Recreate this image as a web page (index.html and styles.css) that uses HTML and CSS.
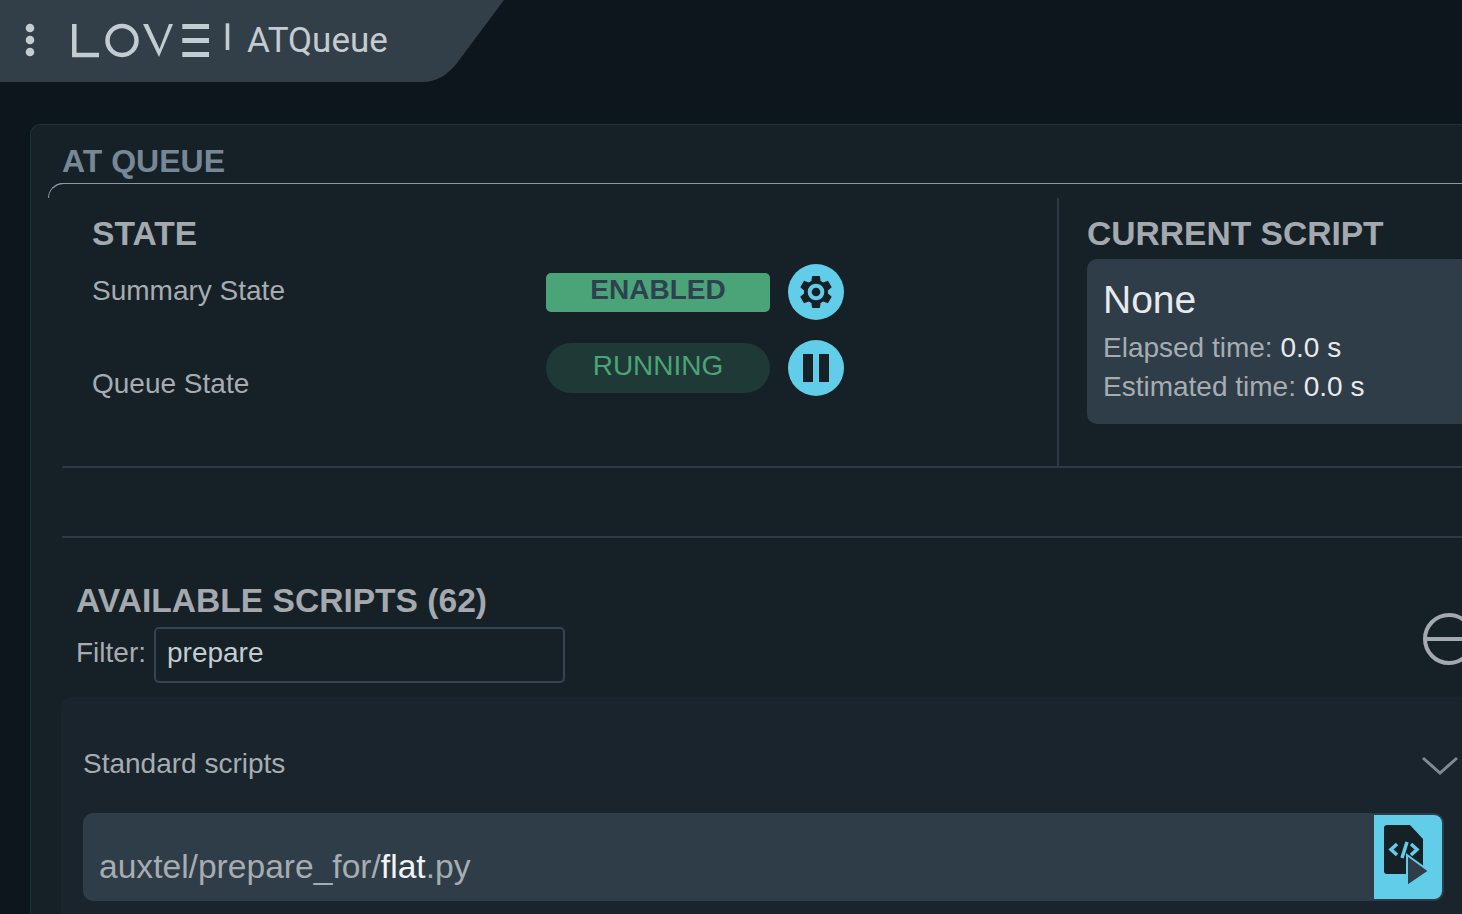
FILE: index.html
```html
<!DOCTYPE html>
<html lang="en">
<head>
<meta charset="utf-8">
<title>ATQueue</title>
<link rel="stylesheet" href="styles.css">
</head>
<body>
<header class="topbar">
  <button class="menu-btn" aria-label="Menu">
    <svg width="10" height="34" viewBox="0 0 10 34"><circle cx="5" cy="5" r="4.3"/><circle cx="5" cy="17" r="4.3"/><circle cx="5" cy="29" r="4.3"/></svg>
  </button>
  <svg class="logo" width="160" height="36" viewBox="0 0 160 36" role="img" aria-label="LOVE">
    <polyline class="logo-line" points="3.3,1 3.3,32 28,32"/>
    <circle class="logo-line" cx="51" cy="17.5" r="14.5"/>
    <polygon class="logo-fill" points="72,1 77,1 88.5,26 98,1 102,1 88,34"/>
    <rect class="logo-fill" x="111.3" y="1" width="26.7" height="5"/>
    <rect class="logo-fill" x="111.3" y="15" width="26.7" height="5"/>
    <rect class="logo-fill" x="111.3" y="29" width="26.7" height="5"/>
    <rect class="logo-fill" x="154.7" y="0.3" width="3.6" height="26.7"/>
  </svg>
  <span class="view-name">ATQueue</span>
</header>

<main class="card">
  <h1 class="card-title">AT QUEUE</h1>
  <div class="card-body">
    <section class="top-grid">
      <div class="state-col">
        <h2 class="heading">STATE</h2>
        <div class="state-grid">
          <span class="label label-first">Summary State</span>
          <span class="pill pill-enabled">ENABLED</span>
          <button class="round-btn" aria-label="Settings">
            <svg width="40" height="40" viewBox="0 0 24 24"><path class="ico" d="M19.14 12.94c.04-.3.06-.61.06-.94 0-.32-.02-.64-.07-.94l2.03-1.58a.49.49 0 0 0 .12-.61l-1.92-3.32a.488.488 0 0 0-.59-.22l-2.39.96c-.5-.38-1.03-.7-1.62-.94l-.36-2.54a.484.484 0 0 0-.48-.41h-3.84c-.24 0-.43.17-.47.41l-.36 2.54c-.59.24-1.13.57-1.62.94l-2.39-.96c-.22-.08-.47 0-.59.22L2.74 8.87c-.12.21-.08.47.12.61l2.03 1.58c-.05.3-.09.63-.09.94s.02.64.07.94l-2.03 1.58a.49.49 0 0 0-.12.61l1.92 3.32c.12.22.37.29.59.22l2.39-.96c.5.38 1.03.7 1.62.94l.36 2.54c.05.24.24.41.48.41h3.84c.24 0 .44-.17.47-.41l.36-2.54c.59-.24 1.13-.56 1.62-.94l2.39.96c.22.08.47 0 .59-.22l1.92-3.32c.12-.22.07-.47-.12-.61l-2.01-1.58z"/><circle class="gear-ring" cx="12" cy="12" r="5"/><circle class="ico" cx="12" cy="12" r="2.6"/></svg>
          </button>
          <span class="label label-second">Queue State</span>
          <span class="pill pill-running">RUNNING</span>
          <button class="round-btn" aria-label="Pause">
            <svg width="26" height="28" viewBox="0 0 26 28"><rect class="ico" x="0" y="0" width="10" height="28"/><rect class="ico" x="16" y="0" width="10" height="28"/></svg>
          </button>
        </div>
      </div>
      <div class="current-col">
        <h2 class="heading">CURRENT SCRIPT</h2>
        <div class="current-panel">
          <div class="current-name">None</div>
          <div class="time-line">Elapsed time: <span class="time-value">0.0 s</span></div>
          <div class="time-line">Estimated time: <span class="time-value">0.0 s</span></div>
        </div>
      </div>
    </section>
    <div class="spacer"></div>

    <section class="available">
      <div class="available-head">
        <div class="available-left">
          <h2 class="heading">AVAILABLE SCRIPTS (62)</h2>
          <div class="filter">
            <span class="filter-label">Filter:</span>
            <div class="filter-input">prepare</div>
          </div>
        </div>
        <svg class="collapse-icon" width="52" height="52" viewBox="0 0 52 52"><circle cx="26" cy="26" r="24"/><line x1="2" y1="26" x2="50" y2="26"/></svg>
      </div>
      <div class="scripts-panel">
        <div class="group-head">
          <span class="group-name">Standard scripts</span>
          <svg class="chevron" width="38" height="20" viewBox="0 0 38 20"><polyline points="2,2 19,17 36,2"/></svg>
        </div>
        <div class="script-row">
          <div class="script-path">auxtel/prepare_for/<span class="script-name">flat</span>.py</div>
          <button class="launch-btn" aria-label="Launch script">
            <svg width="48" height="62" viewBox="0 0 48 62">
              <path class="ico" d="M3 0H26L39 14V46Q39 49 36 49H3Q0 49 0 46V3Q0 0 3 0Z"/>
              <path class="code" d="M13 19L7 24.5L13 30M27 19L33 24.5L27 30M23 17L18 33"/>
              <polygon class="play" points="23,30 45,46 23,61"/>
            </svg>
          </button>
        </div>
      </div>
    </section>
  </div>
</main>
</body>
</html>
```
FILE: styles.css
```css
* { box-sizing: border-box; }
html, body { margin: 0; height: 914px; overflow: hidden; }
body {
  background: #0e161d;
  font-family: "Liberation Sans", Arial, sans-serif;
  color: #a7acb1;
}
button { border: 0; padding: 0; background: none; }

.topbar {
  width: 505px;
  height: 82px;
  background: #333f48;
  clip-path: path("M0 0H504L457 63Q442 82 423 82H0Z");
  display: flex;
  align-items: flex-start;
  padding: 23px 0 0 25px;
}
.menu-btn { width: 10px; height: 34px; display: flex; }
.menu-btn circle { fill: #c3ccd1; }
.logo { margin-left: 36px; flex: none; }
.logo-line { fill: none; stroke: #c3ccd1; stroke-width: 4.5; }
.logo-fill { fill: #c3ccd1; }
.view-name {
  margin: 1px 0 0 16px;
  font-family: Roboto, sans-serif;
  font-size: 35px;
  line-height: 34px;
  color: #c3ccd1;
}

.card {
  margin: 42px 0 0 30px;
  width: 1520px;
  height: 900px;
  background: #162027;
  border: 1px solid #1f313b;
  border-radius: 10px;
  padding: 18px 0 0 17px;
}
.card-title {
  margin: 0 0 4px 14px;
  font-size: 32px;
  line-height: 36px;
  font-weight: 700;
  color: #788795;
}
.card-body {
  position: relative;
  border-top: 1px solid #8a99a5;
  border-left: 1px solid transparent;
  border-top-left-radius: 16px;
  padding: 14px 0 0 13px;
}
.card-body::before {
  content: "";
  position: absolute;
  left: -1px;
  top: -1px;
  width: 18px;
  height: 14px;
  border-top: 1px solid #8a99a5;
  border-left: 1px solid #8a99a5;
  border-top-left-radius: 16px;
}

.top-grid {
  display: grid;
  grid-template-columns: 997px 1fr;
  height: 270px;
  border-bottom: 2px solid #2b3a45;
}
.state-col { border-right: 2px solid #2b3a45; padding: 17px 0 0 30px; }
.current-col { padding: 17px 0 0 28px; }
.heading {
  margin: 0;
  padding-top: 1px;
  font-size: 33.6px;
  line-height: 36px;
  font-weight: 700;
  color: #a4a9af;
}
.state-grid {
  display: grid;
  grid-template-columns: 454px 224px 56px;
  grid-template-rows: 56px 56px;
  column-gap: 0;
  row-gap: 20px;
  margin-top: 12px;
}
.label { font-size: 28px; line-height: 32px; color: #a7acb1; }
.label-first { margin-top: 11px; }
.label-second { margin-top: 28px; }
.pill {
  display: flex;
  align-items: center;
  justify-content: center;
  font-size: 28px;
  line-height: 32px;
  padding-bottom: 5px;
}
.pill-enabled {
  height: 39px;
  margin-top: 9px;
  background: #4ba477;
  color: #2e4150;
  font-weight: 700;
  border-radius: 5px;
}
.pill-running {
  height: 50px;
  margin-top: 3px;
  background: #1e3936;
  color: #4ba477;
  border-radius: 25px;
}
.round-btn {
  width: 56px;
  height: 56px;
  margin-left: 18px;
  border-radius: 50%;
  background: #62cde8;
  display: flex;
  align-items: center;
  justify-content: center;
  flex: none;
}
.ico { fill: #162027; }
.gear-ring { fill: #62cde8; }

.current-panel {
  margin-top: 7px;
  height: 165px;
  background: #2e3d48;
  border-radius: 10px;
  padding: 15px 0 0 16px;
}
.current-name { font-size: 39px; line-height: 52px; color: #e9eaeb; margin-bottom: 2px; }
.time-line { font-size: 28px; line-height: 39px; color: #a7acb1; }
.time-value { color: #e9eaeb; }

.spacer { height: 70px; border-bottom: 2px solid #2b3a45; }

.available { padding-top: 44px; }
.available-head {
  display: flex;
  justify-content: space-between;
  align-items: flex-start;
  width: 1413px;
  padding-left: 14px;
}
.filter { display: flex; align-items: flex-start; margin-top: 8px; }
.filter-label { font-size: 28px; line-height: 32px; margin-top: 10px; width: 78px; color: #a7acb1; }
.filter-input {
  width: 411px;
  height: 56px;
  border: 2px solid #344451;
  border-radius: 5px;
  padding: 8px 0 0 11px;
  font-size: 28px;
  line-height: 32px;
  color: #c3ccd1;
}
.collapse-icon { margin-top: 31px; flex: none; }
.collapse-icon circle, .collapse-icon line { fill: none; stroke: #a4a9af; stroke-width: 4; }

.scripts-panel {
  width: 1440px;
  height: 300px;
  margin: 14px 0 0 -1px;
  background: #19242d;
  border-radius: 10px;
  padding: 0 0 0 22px;
}
.group-head {
  display: flex;
  justify-content: space-between;
  align-items: flex-start;
  width: 1377px;
  height: 116px;
  padding-top: 51px;
}
.group-name { font-size: 28px; line-height: 32px; color: #a7acb1; }
.chevron { margin-top: 8px; margin-right: 1px; flex: none; }
.chevron polyline { fill: none; stroke: #7d8a95; stroke-width: 3; }

.script-row {
  width: 1361px;
  height: 88px;
  background: #2e3d48;
  border-radius: 10px;
  padding: 2px;
  display: flex;
  justify-content: space-between;
}
.script-path { font-size: 33.6px; line-height: 38px; padding: 33px 0 0 14px; color: #a7acb1; }
.script-name { color: #f2f3f3; }
.launch-btn {
  width: 68px;
  height: 84px;
  background: #62cde8;
  border-radius: 0 8px 8px 0;
  display: flex;
  padding: 10px 0 0 10px;
}
.code { fill: none; stroke: #62cde8; stroke-width: 3.5; }
.play { fill: #2e3d48; stroke: #62cde8; stroke-width: 2; }
```
